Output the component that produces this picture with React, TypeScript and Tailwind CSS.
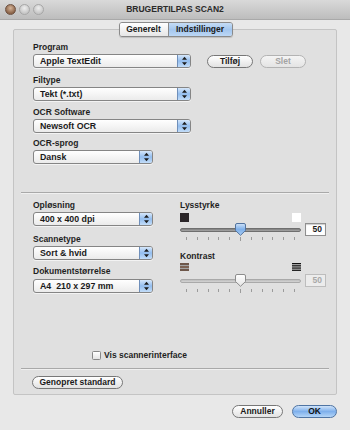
import React from "react";

const Arrows = () => (
  <svg width="7" height="10" viewBox="0 0 7 10">
    <path d="M3.5 0.8 L6 3.8 H1 Z" fill="#1c1c1c" />
    <path d="M1 6.2 H6 L3.5 9.2 Z" fill="#1c1c1c" />
  </svg>
);

function Popup({ className, text }: { className: string; text: string }) {
  return (
    <div
      className={`${className} h-[14px] flex items-stretch rounded-[3px] border border-[#858585] bg-gradient-to-b from-white to-[#ebebeb] shadow-[0_1px_0_rgba(255,255,255,0.6)]`}
    >
      <div className="flex-1 flex items-center pl-[6px] text-[8.8px] font-bold text-[#1a1a1a] leading-none whitespace-pre">
        {text}
      </div>
      <div className="w-[13px] flex items-center justify-center border-l border-[#6f8fba] rounded-r-[2px] bg-gradient-to-b from-[#d6e7fa] via-[#93bdee] to-[#c3ddf8]">
        <Arrows />
      </div>
    </div>
  );
}

function Label({ children, className = "" }: { children: React.ReactNode; className?: string }) {
  return (
    <div className={`h-[12px] leading-[12px] text-[8.5px] font-bold text-[#1f1f1f] ${className}`}>
      {children}
    </div>
  );
}

function PillButton({
  children,
  className,
  disabled = false,
  blue = false,
}: {
  children: React.ReactNode;
  className: string;
  disabled?: boolean;
  blue?: boolean;
}) {
  const skin = blue
    ? "border-[#4f74a3] bg-gradient-to-b from-[#cfe3f9] via-[#7fb0ec] to-[#b4d5f7] text-[#111]"
    : disabled
    ? "border-[#b3b3b3] bg-gradient-to-b from-[#f4f4f4] to-[#e4e4e4] text-[#a3a3a3]"
    : "border-[#777] bg-gradient-to-b from-white to-[#e2e2e2] text-[#1a1a1a]";
  return (
    <div
      className={`${className} h-[13px] rounded-full border flex items-center justify-center text-[8.5px] font-bold leading-none ${skin}`}
    >
      {children}
    </div>
  );
}

function Thumb({ blue, id }: { blue: boolean; id: string }) {
  return (
    <svg width="11" height="13" viewBox="0 0 11 13">
      <defs>
        <linearGradient id={id} x1="0" y1="0" x2="0" y2="1">
          {blue ? (
            <>
              <stop offset="0" stopColor="#cfe2f8" />
              <stop offset="0.5" stopColor="#7eb0ea" />
              <stop offset="1" stopColor="#a9cdf4" />
            </>
          ) : (
            <>
              <stop offset="0" stopColor="#ffffff" />
              <stop offset="1" stopColor="#e4e4e4" />
            </>
          )}
        </linearGradient>
      </defs>
      <path
        d="M2 0.5 H9 Q10.5 0.5 10.5 2 V7.5 L5.5 12.3 L0.5 7.5 V2 Q0.5 0.5 2 0.5 Z"
        fill={`url(#${id})`}
        stroke={blue ? "#52739f" : "#8c8c8c"}
        strokeWidth="1"
      />
    </svg>
  );
}

function Slider({ blue, id, disabled }: { blue: boolean; id: string; disabled?: boolean }) {
  return (
    <div className="flex items-center">
      <div className="relative w-[121px] h-[13px] flex items-center">
        <div
          className={`w-full h-[4px] rounded-full border ${
            disabled
              ? "border-[#a9a9a9] bg-gradient-to-b from-[#bdbdbd] to-[#d4d4d4]"
              : "border-[#6f6f6f] bg-gradient-to-b from-[#7c7c7c] to-[#a8a8a8]"
          }`}
        />
        <div className="absolute left-[55px] top-0">
          <Thumb blue={blue} id={id} />
        </div>
      </div>
      <div
        className={`ml-[4px] w-[21px] h-[13px] border flex items-center justify-end pr-[3px] text-[8.5px] font-bold leading-none ${
          disabled
            ? "border-[#bdbdbd] bg-[#ececec] text-[#a8a8a8]"
            : "border-[#8f8f8f] bg-white text-[#1a1a1a] shadow-[inset_0_1px_1px_rgba(0,0,0,0.2)]"
        }`}
      >
        50
      </div>
    </div>
  );
}

function Ticks() {
  const arr = Array.from({ length: 11 }, (_, i) => i);
  return (
    <div className="w-[121px] px-[6px] flex justify-between items-start h-[4px]">
      {arr.map((i) => (
        <div key={i} className={`w-px bg-[#9b9b9b] ${i === 5 ? "h-[4px]" : "h-[3px]"}`} />
      ))}
    </div>
  );
}

export default function App() {
  return (
    <div className="w-[350px] h-[430px] bg-[#e8e8e8] overflow-hidden [font-family:'Liberation_Sans',Arial,sans-serif] select-none">
      {/* Title bar */}
      <div className="relative h-[20px] bg-gradient-to-b from-[#d9d9d9] to-[#bdbdbd] border-b border-[#a9a9a9] flex items-center justify-center">
        <div className="absolute left-[5px] top-[4px] flex gap-[3px]">
          <div className="w-[11px] h-[11px] rounded-full border border-[#6d5242] bg-[radial-gradient(circle_at_50%_35%,#d6b59a,#8a6348_70%)]" />
          <div className="w-[11px] h-[11px] rounded-full border border-[#a7a7a7] bg-[radial-gradient(circle_at_50%_35%,#eeeeee,#c6c6c6_70%)]" />
          <div className="w-[11px] h-[11px] rounded-full border border-[#a7a7a7] bg-[radial-gradient(circle_at_50%_35%,#eeeeee,#c6c6c6_70%)]" />
        </div>
        <div className="text-[8.5px] font-bold text-[#2a2a2a]">BRUGERTILPAS SCAN2</div>
      </div>

      {/* Tabs */}
      <div className="relative z-10 flex justify-center mt-[2px] pl-[1px]">
        <div className="flex h-[15px] rounded-[3px] border border-[#8a8a8a] overflow-hidden shadow-[0_1px_1px_rgba(0,0,0,0.15)]">
          <div className="w-[49px] flex items-center justify-center bg-gradient-to-b from-white to-[#e6e6e6] text-[8.5px] font-bold text-[#1a1a1a] border-r border-[#8a8a8a]">
            Generelt
          </div>
          <div className="w-[63px] flex items-center justify-center bg-gradient-to-b from-[#c5dcf5] via-[#a3c6ee] to-[#bcd7f5] text-[8.5px] font-bold text-[#1a1a1a]">
            Indstillinger
          </div>
        </div>
      </div>

      {/* Group box */}
      <div className="mx-[13px] -mt-[8px] h-[366px] border border-[#c4c4c4] bg-[#e0e0e0] rounded-[2px] flex flex-col">
        {/* Top section */}
        <div className="flex pl-[19px] pt-[11px]">
          <div className="flex flex-col">
            <Label>Program</Label>
            <Popup className="mt-[1px] w-[158px]" text="Apple TextEdit" />
            <Label className="mt-[6px]">Filtype</Label>
            <Popup className="mt-[1px] w-[158px]" text="Tekt (*.txt)" />
            <Label className="mt-[5px]">OCR Software</Label>
            <Popup className="mt-[1px] w-[158px]" text="Newsoft OCR" />
            <Label className="mt-[4px]">OCR-sprog</Label>
            <Popup className="mt-[1px] w-[120px]" text="Dansk" />
          </div>
          <div className="ml-[16px] mt-[14px] flex gap-[7px]">
            <PillButton className="w-[46px]">Tilføj</PillButton>
            <PillButton className="w-[46px]" disabled>
              Slet
            </PillButton>
          </div>
        </div>

        {/* Separator */}
        <div className="mx-[7px] mt-[28px] h-px bg-[#a9a9a9] shadow-[0_1px_0_rgba(255,255,255,0.5)]" />

        {/* Bottom section */}
        <div className="flex pl-[19px] pt-[6px]">
          <div className="flex flex-col w-[120px]">
            <Label>Opløsning</Label>
            <Popup className="mt-[1px] w-[120px]" text="400 x 400 dpi" />
            <Label className="mt-[7px]">Scannetype</Label>
            <Popup className="mt-[1px] w-[120px]" text="Sort & hvid" />
            <Label className="mt-[5px]">Dokumentstørrelse</Label>
            <Popup className="mt-[2px] w-[120px]" text="A4  210 x 297 mm" />
          </div>
          <div className="ml-[27px] flex flex-col">
            <Label>Lysstyrke</Label>
            <div className="mt-[2px] w-[121px] flex justify-between">
              <div className="w-[9px] h-[9px] bg-[#2b2629]" />
              <div className="w-[9px] h-[9px] bg-white" />
            </div>
            <div className="mt-[1px]">
              <Slider blue id="g1" />
            </div>
            <div className="mt-[1px]">
              <Ticks />
            </div>
            <Label className="mt-[9px]">Kontrast</Label>
            <div className="mt-[1px] w-[121px] flex justify-between">
              <svg width="9" height="8" viewBox="0 0 9 8">
                <rect x="0" y="0" width="9" height="2" fill="#6e574a" />
                <rect x="0" y="2" width="9" height="1" fill="#a3a3a3" />
                <rect x="0" y="3" width="9" height="2" fill="#7d6354" />
                <rect x="0" y="5" width="9" height="1" fill="#a3a3a3" />
                <rect x="0" y="6" width="9" height="2" fill="#6e574a" />
              </svg>
              <svg width="9" height="8" viewBox="0 0 9 8">
                <rect x="0" y="0" width="9" height="1.3" fill="#111" />
                <rect x="0" y="2.2" width="9" height="1.3" fill="#111" />
                <rect x="0" y="4.4" width="9" height="1.3" fill="#111" />
                <rect x="0" y="6.6" width="9" height="1.3" fill="#111" />
              </svg>
            </div>
            <div className="mt-[3px]">
              <Slider blue={false} id="g2" disabled />
            </div>
            <div className="mt-[2px]">
              <Ticks />
            </div>
          </div>
        </div>

        {/* Bottom of box */}
        <div className="mt-auto flex flex-col">
          <div className="flex items-center ml-[78px] h-[12px]">
            <div className="w-[9px] h-[9px] rounded-[1.5px] border border-[#888] bg-gradient-to-b from-white to-[#e4e4e4]" />
            <div className="ml-[3px] text-[8.5px] font-bold text-[#1f1f1f]">Vis scannerinterface</div>
          </div>
          <div className="mx-[7px] mt-[7px] h-px bg-[#a9a9a9] shadow-[0_1px_0_rgba(255,255,255,0.5)]" />
          <div className="ml-[18px] mt-[7px] mb-[5px]">
            <PillButton className="w-[91px]">Genopret standard</PillButton>
          </div>
        </div>
      </div>

      {/* Dialog buttons */}
      <div className="flex justify-end mt-[10px] mr-[13px] gap-[9px]">
        <PillButton className="w-[51px]">Annuller</PillButton>
        <PillButton className="w-[45px]" blue>
          OK
        </PillButton>
      </div>
    </div>
  );
}
